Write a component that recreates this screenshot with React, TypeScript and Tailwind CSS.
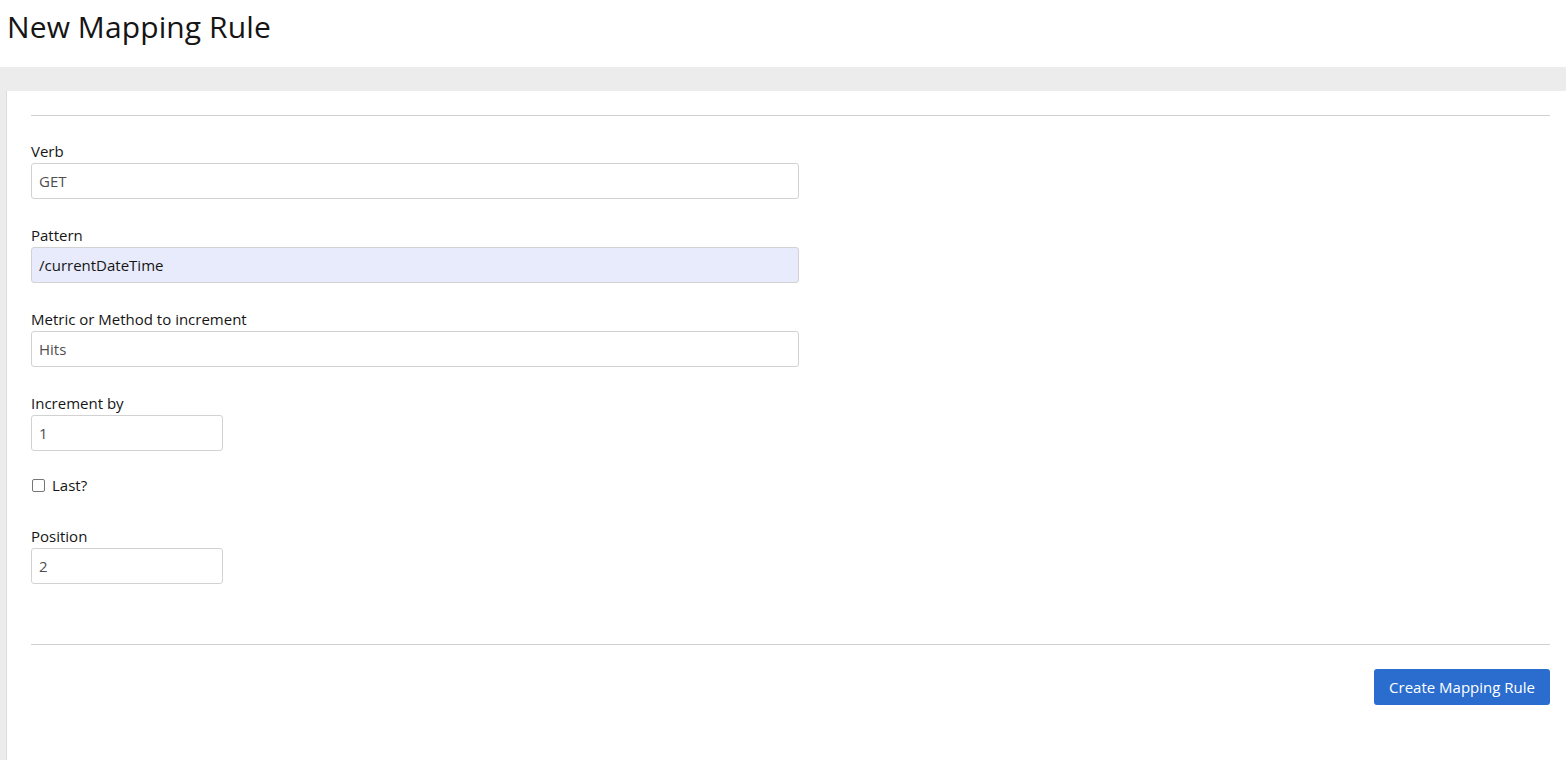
import React from "react";

const font = { fontFamily: '"Open Sans", "Liberation Sans", sans-serif' };

function Field({ label, value, wide = true, autofill = false }: { label: string; value: string; wide?: boolean; autofill?: boolean }) {
  return (
    <div className="flex flex-col">
      <label className="text-[15px] leading-[20px] text-[#151515] mb-[2px]">{label}</label>
      <div
        className={`h-[36px] ${wide ? "w-[768px]" : "w-[192px]"} border border-[#d2d2d2] rounded-[3px] flex items-center px-[7px] text-[15px] ${autofill ? "bg-[#e8ebfb] text-[#151515]" : "bg-white text-[#4f4f4f]"}`}
      >
        {value}
      </div>
    </div>
  );
}

export default function App() {
  return (
    <div className="w-[1566px] h-[760px] bg-white overflow-hidden" style={font}>
      <div className="h-[67px] pt-[10px] pl-[7px]">
        <h1 className="text-[30px] leading-[34px] text-[#151515] font-normal tracking-[0.1px]">New Mapping Rule</h1>
      </div>
      <div className="bg-[#ececec] pt-[24px] pl-[6px] h-[693px]">
        <div className="bg-white h-full border-l border-[#dcdcdc] pl-[24px] pr-[16px] pt-[24px]">
          <div className="border-t border-[#d2d2d2]" />
          <div className="flex flex-col gap-[26px] pt-[25px]">
            <Field label="Verb" value="GET" />
            <Field label="Pattern" value="/currentDateTime" autofill />
            <Field label="Metric or Method to increment" value="Hits" />
            <Field label="Increment by" value="1" wide={false} />
            <div className="flex items-center gap-[7px] h-[22px] mt-[-3px] mb-[4px] pl-[1px]">
              <span className="w-[13px] h-[13px] border border-[#767676] rounded-[2px] bg-white" />
              <span className="text-[15px] text-[#151515]">Last?</span>
            </div>
            <Field label="Position" value="2" wide={false} />
          </div>
          <div className="border-t border-[#d2d2d2] mt-[60px]" />
          <div className="flex justify-end pt-[24px]">
            <button className="h-[36px] px-[15px] bg-[#2a6dcf] text-white text-[15px] rounded-[3px]">Create Mapping Rule</button>
          </div>
        </div>
      </div>
    </div>
  );
}
